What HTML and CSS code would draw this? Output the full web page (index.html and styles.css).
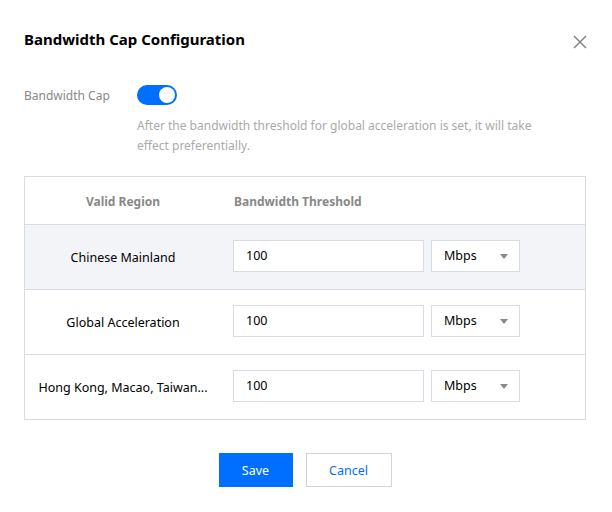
FILE: index.html
```html
<!DOCTYPE html>
<html>
<head>
<meta charset="utf-8">
<link rel="stylesheet" href="styles.css">
</head>
<body>
<div class="dialog">
  <div class="dialog-head">
    <h2 class="title">Bandwidth Cap Configuration</h2>
    <button class="close" aria-label="Close">
      <svg width="14" height="14" viewBox="0 0 14 14"><path d="M1 1L13 13M13 1L1 13" stroke="#888" stroke-width="1.6" fill="none"/></svg>
    </button>
  </div>
  <div class="form-row">
    <div class="form-label">Bandwidth Cap</div>
    <div class="form-ctrl">
      <div class="switch"><span class="knob"></span></div>
      <p class="hint">After the bandwidth threshold for global acceleration is set, it will take effect preferentially.</p>
    </div>
  </div>
  <div class="table">
    <div class="tr thead">
      <div class="td c1">Valid Region</div>
      <div class="td c2">Bandwidth Threshold</div>
    </div>
    <div class="tr hover">
      <div class="td c1">Chinese Mainland</div>
      <div class="td c2"><div class="input">100</div><div class="select">Mbps<span class="caret"></span></div></div>
    </div>
    <div class="tr">
      <div class="td c1">Global Acceleration</div>
      <div class="td c2"><div class="input">100</div><div class="select">Mbps<span class="caret"></span></div></div>
    </div>
    <div class="tr last">
      <div class="td c1">Hong Kong, Macao, Taiwan...</div>
      <div class="td c2"><div class="input">100</div><div class="select">Mbps<span class="caret"></span></div></div>
    </div>
  </div>
  <div class="footer">
    <button class="btn primary">Save</button>
    <button class="btn">Cancel</button>
  </div>
</div>
</body>
</html>
```
FILE: styles.css
```css
* { box-sizing: border-box; }
html, body { margin: 0; background: #fff; }
body { font-family: "Noto Sans", "Open Sans", sans-serif; color: #000; }
.dialog { width: 612px; padding: 27px 25px 0 24px; }
.dialog-head { display: flex; justify-content: space-between; align-items: center; height: 24px; }
.title { margin: 0; font-size: 15px; font-weight: 700; line-height: 24px; color: #000; }
.close { border: 0; background: none; padding: 0; width: 14px; height: 14px; margin-top: 6px; display: flex; }
.form-row { display: flex; margin-top: 34px; }
.form-label { width: 113px; font-size: 12px; color: #888; line-height: 20px; padding-top: 1px; }
.form-ctrl { flex: 1; }
.switch { width: 40px; height: 20px; border-radius: 10px; background: #006eff; position: relative; }
.knob { position: absolute; right: 2px; top: 2px; width: 16px; height: 16px; border-radius: 50%; background: #fff; }
.hint { margin: 11px 0 0; max-width: 420px; font-size: 12px; line-height: 20px; color: #aaa; }
.table { margin-top: 20px; border: 1px solid #d8dce3; width: 562px; }
.tr { display: flex; align-items: center; height: 65px; border-top: 1px solid #d8dce3; }
.tr.thead { height: 47px; border-top: 0; padding-top: 3px; }
.tr.hover { background: #f2f4f7; }
.td { font-size: 12.5px; line-height: 20px; color: #000; }
.c1 { width: 196px; padding: 0 12px; text-align: center; white-space: nowrap; }
.c2 { flex: 1; padding: 0 12px; display: flex; gap: 7px; align-items: center; }
.tr:not(.thead) .c1 { padding-top: 2px; }
.tr:not(.thead) .c2 { padding-bottom: 2px; }
.thead .td { font-weight: 700; color: #888; font-size: 12px; }
.thead .c2 { padding-left: 13px; }
.input { width: 191px; height: 32px; border: 1px solid #d8dce3; background: #fff; padding: 0 12px; line-height: 30px; font-size: 12.5px; }
.select { width: 89px; height: 32px; border: 1px solid #d8dce3; background: #fff; padding: 0 12px; line-height: 30px; font-size: 12.5px; display: flex; justify-content: space-between; align-items: center; color: #000; }
.caret { width: 0; height: 0; border-left: 4px solid transparent; border-right: 4px solid transparent; border-top: 5px solid #888; margin-right: -1px; }
.footer { display: flex; justify-content: center; gap: 13px; margin-top: 33px; padding-right: 1px; }
.btn { height: 34px; font-family: inherit; font-size: 12.5px; border: 1px solid #cfd5de; background: #fff; color: #006eff; cursor: pointer; }
.btn.primary { background: #006eff; border-color: #006eff; color: #fff; width: 74px; padding: 0; }
.btn:not(.primary) { width: 86px; padding: 0; }
```
